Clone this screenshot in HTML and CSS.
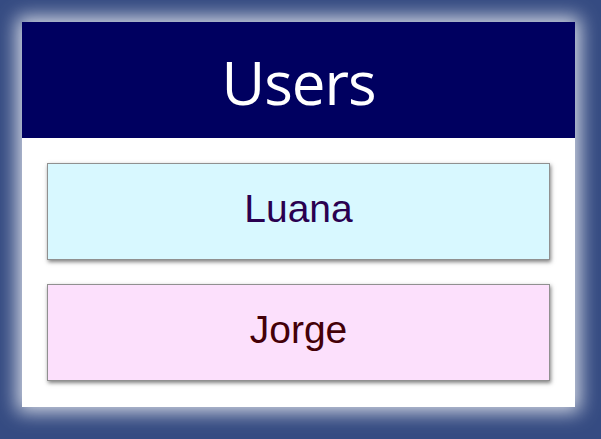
FILE: index.html
```html
<!DOCTYPE html>
<html>
<head>
<meta charset="utf-8">
<link rel="stylesheet" href="styles.css">
</head>
<body>
<div class="panel">
  <div class="header"><h1 class="title">Users</h1></div>
  <div class="list">
    <div class="card card-blue">Luana</div>
    <div class="card card-pink">Jorge</div>
  </div>
</div>
</body>
</html>
```
FILE: styles.css
```css
html, body { margin: 0; padding: 0; }
body {
  background: #354b82;
  width: 601px;
  height: 439px;
  padding: 22px 26px 32px 22px;
  box-sizing: border-box;
}
.panel {
  background: #ffffff;
  box-shadow: 0 0 18px 5px rgba(255,255,255,0.8);
  display: flex;
  flex-direction: column;
  height: 385px;
}
.header {
  background: #000060;
  height: 116px;
  display: flex;
  align-items: center;
  justify-content: center;
}
.title {
  margin: 0;
  color: #ffffff;
  font-family: "Open Sans", "Noto Sans", sans-serif;
  font-weight: 400;
  font-size: 60px;
  line-height: 1;
  letter-spacing: -1px;
  padding-top: 4px;
}
.list {
  padding: 25px 25px 26px 25px;
  display: flex;
  flex-direction: column;
  gap: 24px;
}
.card {
  height: 97px;
  box-sizing: border-box;
  border: 1px solid #909090;
  box-shadow: 1px 2px 4px rgba(0,0,0,0.5);
  display: flex;
  align-items: center;
  justify-content: center;
  padding-bottom: 6px;
  font-family: "Liberation Sans", Arial, sans-serif;
  font-size: 39px;
}
.card-blue { background: #d8f8ff; color: #2a0050; }
.card-pink { background: #fce0fc; color: #440008; }
```
